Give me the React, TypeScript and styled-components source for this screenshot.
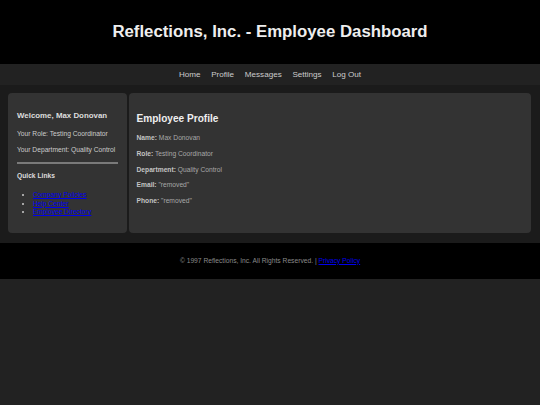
import React from "react";
import styled, { createGlobalStyle } from "styled-components";

const GlobalStyle = createGlobalStyle`
  html, body {
    margin: 0;
    padding: 0;
    background: #222222;
    font-family: "Liberation Sans", Arial, Helvetica, sans-serif;
  }
`;

const Header = styled.header`
  background: #000000;
  padding: 22.2px 0 22.5px;
  text-align: center;
`;

const Title = styled.h1`
  margin: 0;
  font-size: 16.8px;
  line-height: 19.3px;
  font-weight: bold;
  color: #eeeeee;
`;

const Nav = styled.nav`
  background: #222222;
  padding: 5.7px 0;
  display: flex;
  justify-content: center;
  gap: 10.7px;
`;

const NavLink = styled.a`
  font-size: 8.1px;
  line-height: 9.6px;
  color: #cccccc;
  text-decoration: none;
`;

const Container = styled.div`
  background: #1b1b1b;
  padding: 8px 9px 10px 8px;
  display: flex;
  gap: 2px;
  align-items: stretch;
`;

const Card = styled.div`
  background: #333333;
  border-radius: 4px;
  box-sizing: border-box;
`;

const Sidebar = styled(Card)`
  width: 119px;
  flex: none;
  padding: 9px 9px 9px;
`;

const MainCard = styled(Card)`
  flex: 1;
  padding: 9px 9px 9px 7.5px;
`;

const Welcome = styled.h3`
  margin: 9px 0 9px;
  font-size: 7.9px;
  line-height: 9.08px;
  font-weight: bold;
  color: #dddddd;
`;

const Text = styled.p<{ $tone?: string }>`
  margin: 6.75px 0;
  font-size: 6.7px;
  line-height: 9px;
  color: ${(p) => p.$tone || "#cccccc"};
`;

const Rule = styled.hr`
  margin: 8px 0 8.5px;
  border: none;
  height: 2px;
  background: #7a7a7a;
`;

const SubHeading = styled.h4`
  margin: 0 0 11px;
  font-size: 6.7px;
  line-height: 7.7px;
  font-weight: bold;
  color: #dddddd;
`;

const LinkList = styled.ul`
  margin: 0 0 6.75px;
  padding-left: 16px;
  list-style: disc;
`;

const LinkItem = styled.li`
  font-size: 6.7px;
  line-height: 8.6px;
  color: #cccccc;
`;

const BlueLink = styled.a`
  color: #0000ee;
  text-decoration: underline;
`;

const ProfileTitle = styled.h2`
  margin: 11px 0 8.5px;
  font-size: 10.1px;
  line-height: 11.6px;
  font-weight: bold;
  color: #eeeeee;
`;

const Label = styled.strong`
  color: #c4c4c4;
  font-weight: bold;
`;

const Footer = styled.footer`
  background: #000000;
  padding: 14.2px 0;
  text-align: center;
  font-size: 6.7px;
  line-height: 7.7px;
  color: #8a8a8a;
`;

const navItems = ["Home", "Profile", "Messages", "Settings", "Log Out"];
const quickLinks = ["Company Policies", "Help Center", "Employee Directory"];
const profile: [string, string][] = [
  ["Name:", "Max Donovan"],
  ["Role:", "Testing Coordinator"],
  ["Department:", "Quality Control"],
  ["Email:", "\"removed\""],
  ["Phone:", "\"removed\""],
];

export default function App() {
  return (
    <>
      <GlobalStyle />
      <Header>
        <Title>Reflections, Inc. - Employee Dashboard</Title>
      </Header>
      <Nav>
        {navItems.map((n) => (
          <NavLink key={n} href="#">
            {n}
          </NavLink>
        ))}
      </Nav>
      <Container>
        <Sidebar>
          <Welcome>Welcome, Max Donovan</Welcome>
          <Text>Your Role: Testing Coordinator</Text>
          <Text>Your Department: Quality Control</Text>
          <Rule />
          <SubHeading>Quick Links</SubHeading>
          <LinkList>
            {quickLinks.map((l) => (
              <LinkItem key={l}>
                <BlueLink href="#">{l}</BlueLink>
              </LinkItem>
            ))}
          </LinkList>
        </Sidebar>
        <MainCard>
          <ProfileTitle>Employee Profile</ProfileTitle>
          {profile.map(([k, v]) => (
            <Text key={k} $tone="#a8a8a8">
              <Label>{k}</Label> {v}
            </Text>
          ))}
        </MainCard>
      </Container>
      <Footer>
        © 1997 Reflections, Inc. All Rights Reserved. | <BlueLink href="#">Privacy Policy</BlueLink>
      </Footer>
    </>
  );
}
